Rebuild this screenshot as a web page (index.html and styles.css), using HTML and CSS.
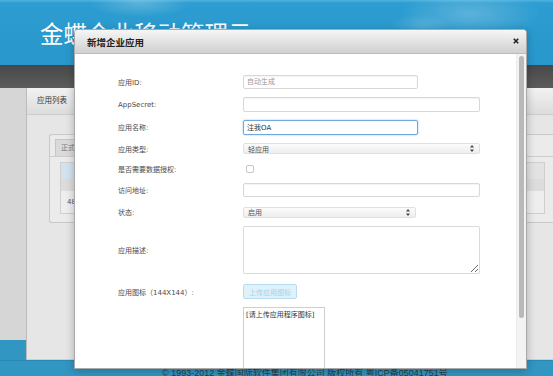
FILE: index.html
```html
<!DOCTYPE html>
<html lang="zh-CN">
<head>
  <meta charset="UTF-8">
  <meta name="viewport" content="width=device-width, initial-scale=1.0">
  <title>新增企业应用</title>
  <link rel="stylesheet" href="styles.css">
</head>
<body>
  <div class="header">
    <h1 class="logo">金蝶企业移动管理云</h1>
  </div>
  <div class="nav"></div>
  <div class="main">
    <div class="side"></div>
    <div class="panel">
      <div class="panel-head">应用列表</div>
      <div class="panel-body">
        <div class="tabbox">
          <ul class="tabs">
            <li class="tab">正式</li>
          </ul>
          <table class="list">
            <tr class="th"><td class="first"></td><td></td></tr>
            <tr class="odd"><td></td><td></td></tr>
            <tr class="even"><td>48</td><td></td></tr>
          </table>
        </div>
      </div>
    </div>
  </div>
  <div class="footer">© 1993-2012 金蝶国际软件集团有限公司 版权所有 粤ICP备05041751号</div>

  <!-- 新增企业应用 弹窗 -->
  <div class="modal">
    <div class="modal-head">
      <h3 class="modal-title">新增企业应用</h3>
      <a href="javascript:void(0);" class="btn-close">
        <svg width="6" height="6" viewBox="0 0 6 6"><path d="M0.8 0.8L5.2 5.2M5.2 0.8L0.8 5.2" stroke="#222" stroke-width="1.6"/></svg>
      </a>
    </div>
    <div class="modal-body">
      <form class="form">
        <div class="row wide">
          <label class="label">应用ID:</label>
          <input type="text" class="input short" placeholder="自动生成">
        </div>
        <div class="row wide">
          <label class="label">AppSecret:</label>
          <input type="text" class="input long tall">
        </div>
        <div class="row">
          <label class="label">应用名称:</label>
          <input type="text" class="input short tall focus" value="注我OA">
        </div>
        <div class="row narrow">
          <label class="label">应用类型:</label>
          <div class="select long">
            <span>轻应用</span>
            <svg width="4" height="7" viewBox="0 0 4 7"><path d="M2 0L4 2.6H0Z M2 7L4 4.4H0Z" fill="#444"/></svg>
          </div>
        </div>
        <div class="row check">
          <label class="label">是否需要数据授权:</label>
          <input type="checkbox" class="checkbox">
        </div>
        <div class="row">
          <label class="label">访问地址:</label>
          <input type="text" class="input long">
        </div>
        <div class="row">
          <label class="label">状态:</label>
          <div class="select status">
            <span>启用</span>
            <svg width="4" height="7" viewBox="0 0 4 7"><path d="M2 0L4 2.6H0Z M2 7L4 4.4H0Z" fill="#444"/></svg>
          </div>
        </div>
        <div class="row desc">
          <label class="label">应用描述:</label>
          <textarea class="textarea"></textarea>
        </div>
        <div class="row upload">
          <label class="label">应用图标（144X144）:</label>
          <button type="button" class="btn-upload">上传应用图标</button>
        </div>
        <div class="preview">[请上传应用程序图标]</div>
      </form>
      <div class="scrollbar"><div class="thumb"></div></div>
    </div>
  </div>
</body>
</html>
```

FILE: styles.css
```css
/* 通用样式 */
* {
  margin: 0;
  padding: 0;
  box-sizing: border-box;
}
a {
  color: inherit;
  text-decoration: none;
}
ul {
  list-style: none;
}
body {
  position: relative;
  height: 376px;
  overflow: hidden;
  background: #d6d6d6;
  font-family: "DejaVu Sans", "Noto Sans CJK SC", sans-serif;
  color: #444;
}

/* 顶部 */
.header {
  height: 65px;
  background:
    radial-gradient(ellipse 50px 14px at 140px 3px, rgba(255,255,255,.22), transparent),
    radial-gradient(ellipse 70px 26px at 470px 14px, rgba(255,255,255,.22), transparent),
    radial-gradient(ellipse 30px 12px at 420px 26px, rgba(255,255,255,.15), transparent),
    linear-gradient(#4fb4e0 0, #2d9dd1 3px, #2897cb 100%);
}
.logo {
  padding: 21px 0 0 40px;
  font-family: "Noto Sans CJK SC", sans-serif;
  font-size: 23.5px;
  line-height: 24px;
  font-weight: normal;
  color: #fff;
}
.nav {
  height: 23px;
  background: linear-gradient(#484848, #5c5c5c);
}

/* 主体 */
.main {
  display: flex;
  height: 272px;
}
.side {
  width: 27px;
  border-right: 1px solid #bcbcbc;
  background: linear-gradient(#d6d6d6 252px, #3196c2 252px);
}
.panel {
  flex: 1;
  display: flex;
  flex-direction: column;
  background: #e6e6e6;
  border-bottom: 1px solid #cfcfcf;
}
.panel-head {
  height: 27px;
  padding-left: 10px;
  line-height: 26px;
  font-size: 7.5px;
  color: #333;
  border-bottom: 1px solid #cdcdcd;
  background: linear-gradient(#f2f2f2, #dcdcdc);
}
.panel-body {
  padding: 19px 0 0 22px;
}
.tabbox {
  height: 89px;
  border: 1px solid #c9c9c9;
  border-right: none;
  border-radius: 3px 0 0 3px;
  background: #ebebeb;
}
.tabs {
  display: flex;
  height: 22px;
  padding: 4px 0 0 5px;
  border-bottom: 1px solid #cdcdcd;
}
.tab {
  padding: 0 5px;
  line-height: 17px;
  font-size: 7px;
  color: #777;
  background: #dadada;
  border: 1px solid #c6c6c6;
  border-bottom: none;
}
.list {
  margin: 5px 0 0 10px;
  width: 485px;
  border-collapse: collapse;
  border: 1px solid #cfcfcf;
  font-size: 7px;
  color: #555;
}
.list td {
  padding: 0 6px;
}
.list td.first {
  width: 15px;
  background: #d3e2ef;
}
.list .th {
  height: 16px;
  background: #e2e2e2;
}
.list .odd {
  height: 12px;
  background: #dcdcdc;
}
.list .even {
  height: 23px;
  background: #eeeeee;
}

/* 底部 */
.footer {
  height: 20px;
  padding: 4px 0 0 162px;
  line-height: 16px;
  font-family: "Liberation Sans", "Noto Sans CJK SC", sans-serif;
  font-size: 9px;
  color: #2a3a44;
  background: #3196c2;
  border-top: 1px solid #2a88b2;
}

/* 弹窗 */
.modal {
  position: absolute;
  top: 29px;
  left: 74px;
  width: 453px;
  height: 340px;
  display: flex;
  flex-direction: column;
  background: #fff;
  border: 1px solid #a9a9a9;
  border-radius: 4px 4px 0 0;
  box-shadow: 0 2px 8px rgba(0, 0, 0, .25);
}
.modal-head {
  display: flex;
  align-items: center;
  justify-content: space-between;
  height: 24px;
  padding: 0 7px 0 12px;
  border-bottom: 1px solid #bcbcbc;
  border-radius: 3px 3px 0 0;
  background: linear-gradient(#f6f6f6, #d0d0d0);
}
.modal-title {
  font-family: "Noto Sans CJK SC", sans-serif;
  font-size: 9.5px;
  font-weight: bold;
  color: #222;
}
.btn-close {
  display: block;
  width: 6px;
  height: 6px;
  margin-top: -1px;
}
.btn-close svg {
  display: block;
}
.modal-body {
  flex: 1;
  display: flex;
  overflow: hidden;
}
.form {
  flex: 1;
  padding: 16px 0 0 43px;
}
.scrollbar {
  width: 10px;
  padding: 2px 0 0 2px;
  background: #f3f3f3;
  border-left: 1px solid #ececec;
}
.thumb {
  width: 5px;
  height: 262px;
  border-radius: 3px;
  background: #b9b9b9;
}

/* 表单 */
.row {
  display: flex;
  align-items: center;
  height: 22px;
}
.row.wide {
  height: 23px;
}
.row.narrow {
  height: 21px;
}
.row.check {
  height: 20px;
}
.row.desc {
  height: 48px;
  margin-top: 3px;
}
.row.upload {
  height: 15px;
  margin-top: 10px;
}
.label {
  flex: none;
  width: 125px;
  font-size: 7px;
  color: #4a4a4a;
}
.input {
  height: 14px;
  padding: 0 3px;
  border: 1px solid #d8d8d8;
  border-radius: 2px;
  font: 7px "DejaVu Sans", "Noto Sans CJK SC", sans-serif;
  color: #333;
  outline: none;
  box-shadow: inset 0 1px 1px rgba(0, 0, 0, .05);
}
.input::placeholder {
  color: #999;
}
.input.tall {
  height: 15px;
}
.input.short {
  width: 175px;
}
.input.long {
  width: 237px;
}
.input.focus {
  border-color: #6fa8da;
  box-shadow: 0 0 2px rgba(82, 168, 236, .7);
}
.select {
  display: flex;
  align-items: center;
  justify-content: space-between;
  height: 11px;
  padding: 0 5px 0 4px;
  font-size: 7px;
  color: #555;
  border: 1px solid #e0e0e0;
  border-radius: 2px;
  background: linear-gradient(#fbfbfb, #eeeeee);
}
.select.long {
  width: 237px;
}
.select.status {
  width: 173px;
}
.checkbox {
  appearance: none;
  width: 8px;
  height: 8px;
  margin-left: 3px;
  border: 1px solid #c4c4c4;
  border-radius: 2px;
  background: #fff;
}
.textarea {
  width: 237px;
  height: 48px;
  border: 1px solid #dadada;
  border-radius: 2px;
  outline: none;
}
.btn-upload {
  width: 54px;
  height: 15px;
  font: 7px "DejaVu Sans", "Noto Sans CJK SC", sans-serif;
  color: #a3d2ea;
  background: #e0f1fa;
  border: 1px solid #b8dcef;
  border-radius: 2px;
}
.preview {
  width: 82px;
  height: 80px;
  margin: 8px 0 0 125px;
  padding: 3px 2px;
  font-size: 7px;
  line-height: 9px;
  color: #333;
  white-space: nowrap;
  border: 1px solid #cfcfcf;
}
```
